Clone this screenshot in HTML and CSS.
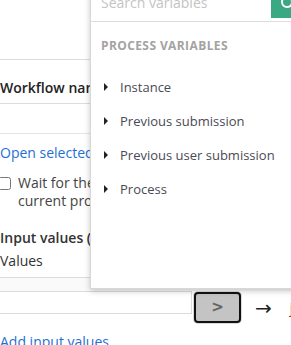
FILE: index.html
```html
<!doctype html>
<html>
<head>
	<title>Workflow step</title>
	<link rel="stylesheet" href="styles.css">
</head>
<body>
<div class="page">
	<div class="grid">
		<div class="grid-top"></div>
		<div class="grid-head">Workflow name</div>
		<div class="grid-row"></div>
	</div>
	<a class="link open-link" href="#">Open selected workflow</a>
	<label class="check">
		<input type="checkbox">
		<span>Wait for the workflow to finish before continuing the<br>current process</span>
	</label>
	<div class="section-title">Input values (Optional)</div>
	<div class="section-sub">Values</div>
	<div class="values-head"></div>
	<div class="value-row">
		<input class="value-input" type="text">
		<button class="pick" type="button">&gt;</button>
		<span class="arrow">&#8594;</span>
		<span class="target">jobId</span>
	</div>
	<a class="link add-link" href="#">Add input values</a>
</div>

<div class="popover">
	<div class="search">
		<input class="search-input" type="text" placeholder="Search variables">
		<button class="search-btn" type="button">
			<svg width="16" height="16" viewBox="0 0 16 16"><circle cx="7" cy="7" r="5" fill="none" stroke="#fff" stroke-width="2"/><line x1="11" y1="11" x2="15" y2="15" stroke="#fff" stroke-width="2"/></svg>
		</button>
	</div>
	<div class="group-title">PROCESS VARIABLES</div>
	<ul class="var-list">
		<li><span class="caret"></span>Instance</li>
		<li><span class="caret"></span>Previous submission</li>
		<li><span class="caret"></span>Previous user submission</li>
		<li><span class="caret"></span>Process</li>
	</ul>
</div>
</body>
</html>
```

FILE: styles.css
```css
html, body {margin: 0; padding: 0; overflow: hidden;}
body {background: #fff; font-family: "Open Sans", "Noto Sans", sans-serif; font-size: 14px; color: #333; position: relative; height: 345px;}

.page {width: 291px;}

.grid-top {height: 59px; border-bottom: 1px solid #dcdcdc;}
.grid-head {height: 25px; padding-top: 18px; line-height: 20px; font-weight: 600; color: #222; border-bottom: 1px solid #dcdcdc; white-space: nowrap;}
.grid-row {height: 29px; border-bottom: 1px solid #e4e4e4;}

.link {display: block; color: #1f6fd6; text-decoration: none; line-height: 20px; white-space: nowrap;}
.open-link {margin-top: 9px;}

.check {display: flex; gap: 7px; margin-top: 11px; line-height: 18px; color: #444; white-space: nowrap;}
.check input {margin: 3px 0 0 -2px; width: 13px; height: 13px; flex: none;}

.section-title {margin-top: 18px; line-height: 20px; font-weight: 600; color: #333; white-space: nowrap;}
.section-sub {margin-top: 3px; line-height: 20px; color: #333;}

.values-head {margin-top: 6px; height: 13px; border-top: 1px solid #dcdcdc; background: #fafafa;}

.value-row {display: flex; align-items: flex-start; height: 33px;}
.value-input {width: 192px; box-sizing: border-box; height: 23px; margin: 0; border: 1px solid #dcdcdc; border-left: 0; background: #fff; flex: none;}
.pick {width: 47px; height: 31px; margin: 1px 0 0 2px; padding: 0 0 2px; border: 2px solid #111; border-radius: 4px; background: #c4c4c4; color: #666; font-family: "DejaVu Sans", sans-serif; font-size: 15px; font-weight: 700; box-shadow: 0 0 0 1px #dadada; flex: none;}
.arrow {margin: 5px 0 0 14px; font-size: 20px; line-height: 24px; color: #222; font-family: "DejaVu Sans", sans-serif;}
.target {margin: 7px 0 0 18px; color: #c62828; line-height: 20px;}

.add-link {margin-top: 8px;}

.popover {position: absolute; left: 90px; top: -17px; width: 230px; height: 304px; background: #fff; border: 1px solid #d8d8d8; box-shadow: 0 2px 6px rgba(0,0,0,.22);}
.search {display: flex; align-items: center; height: 37px; padding: 0 0 0 10px; border-bottom: 1px solid #dedede;}
.search-input {flex: 1; border: 0; outline: 0; padding: 0; font-family: "Open Sans", sans-serif; font-size: 14px; min-width: 0;}
.search-input::placeholder {color: #c4c4c4;}
.search-btn {width: 34px; height: 30px; margin-right: 16px; border: 0; padding: 0; background: #3aa882; display: flex; align-items: center; justify-content: center;}

.group-title {padding: 16px 0 0 10px; line-height: 16px; font-size: 12px; font-weight: 700; color: #a3a3a3; letter-spacing: .4px;}
.var-list {list-style: none; margin: 16px 0 0; padding: 0;}
.var-list li {height: 34px; line-height: 34px; padding-left: 13px; display: flex; align-items: center; font-size: 13px; color: #4a4a55; white-space: nowrap;}
.caret {width: 0; height: 0; border-top: 4px solid transparent; border-bottom: 4px solid transparent; border-left: 4px solid #222; margin-right: 12px;}
```
